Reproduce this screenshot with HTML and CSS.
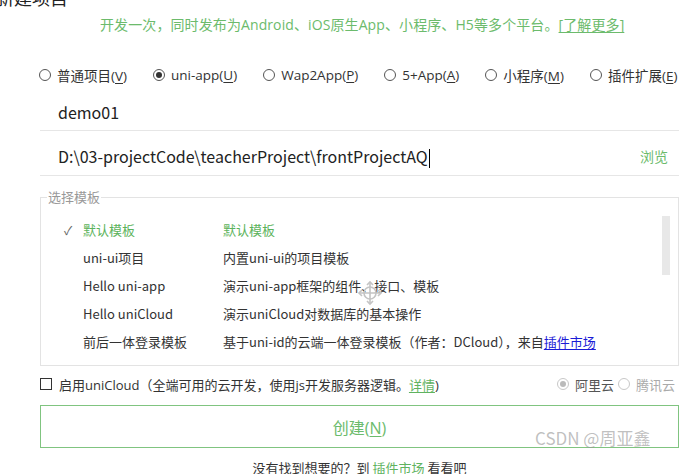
FILE: index.html
```html
<!DOCTYPE html>
<html lang="zh-CN">
<head>
<meta charset="utf-8">
<title>新建项目</title>
<link rel="stylesheet" href="styles.css">
</head>
<body>
<div class="page">
  <div class="title">新建项目</div>
  <div class="subtitle">开发一次，同时发布为Android、iOS原生App、小程序、H5等多个平台。<span class="u">[了解更多]</span></div>
  <div class="radios">
    <label class="radio"><span class="dot"></span><span>普通项目(<span class="u">V</span>)</span></label>
    <label class="radio"><span class="dot on"></span><span>uni-app(<span class="u">U</span>)</span></label>
    <label class="radio"><span class="dot"></span><span>Wap2App(<span class="u">P</span>)</span></label>
    <label class="radio"><span class="dot"></span><span>5+App(<span class="u">A</span>)</span></label>
    <label class="radio"><span class="dot"></span><span>小程序(<span class="u">M</span>)</span></label>
    <label class="radio"><span class="dot"></span><span>插件扩展(<span class="u">E</span>)</span></label>
  </div>
  <div class="field name-field"><span class="val">demo01</span></div>
  <div class="field path-field"><span class="val">D:\03-projectCode\teacherProject\frontProjectAQ<span class="caret"></span></span><span class="browse">浏览</span></div>
  <fieldset class="tpl">
    <legend>选择模板</legend>
    <div class="rows">
      <div class="row sel"><span class="chk">✓</span><span class="name">默认模板</span><span class="desc">默认模板</span></div>
      <div class="row"><span class="chk"></span><span class="name">uni-ui项目</span><span class="desc">内置uni-ui的项目模板</span></div>
      <div class="row"><span class="chk"></span><span class="name">Hello uni-app</span><span class="desc">演示uni-app框架的组件、接口、模板</span></div>
      <div class="row"><span class="chk"></span><span class="name">Hello uniCloud</span><span class="desc">演示uniCloud对数据库的基本操作</span></div>
      <div class="row"><span class="chk"></span><span class="name">前后一体登录模板</span><span class="desc">基于uni-id的云端一体登录模板（作者：DCloud），来自<span class="link">插件市场</span></span></div>
    </div>
    <div class="scroll"></div>
    <svg class="cursor" width="26" height="26" viewBox="0 0 26 26">
      <g fill="none" stroke="#c4c4c4" stroke-width="1.6">
        <circle cx="13" cy="13" r="6"/>
        <path d="M13 2v22M2 13h22"/>
        <path d="M10 5l3-3 3 3M10 21l3 3 3-3M5 10l-3 3 3 3M21 10l3 3-3 3"/>
      </g>
    </svg>
  </fieldset>
  <div class="cloud">
    <label class="check"><span class="box"></span><span>启用uniCloud（全端可用的云开发，使用js开发服务器逻辑。<span class="g u">详情</span>)</span></label>
    <div class="providers">
      <label class="radio dis"><span class="dot on"></span><span class="dark">阿里云</span></label>
      <label class="radio dis"><span class="dot"></span><span>腾讯云</span></label>
    </div>
  </div>
  <div class="create"><span>创建(<span class="u">N</span>)</span></div>
  <div class="foot">没有找到想要的？到 <span class="g">插件市场</span> 看看吧</div>
  <div class="mark">CSDN @周亚鑫</div>
</div>
</body>
</html>
```
FILE: styles.css
```css
* { box-sizing: border-box; }
html, body { margin: 0; padding: 0; background: #fff; }
body {
  font-family: "Noto Sans CJK SC", "Noto Sans", sans-serif;
  color: #333;
  font-size: 13px;
  width: 682px;
  height: 474px;
  overflow: hidden;
}
.page { padding: 0 3px 0 40px; position: relative; height: 474px; }
.title {
  font-size: 18px;
  line-height: 24px;
  height: 24px;
  margin: -15px 0 0 -44px;
  color: #222;
}
.subtitle {
  font-family: "Open Sans", "Noto Sans CJK SC", sans-serif;
  color: #6cbb6c;
  font-size: 14px;
  line-height: 20px;
  height: 20px;
  margin-top: 6px;
  padding-left: 60px;
  white-space: nowrap;
  letter-spacing: 0.1px;
}
.u { text-decoration: underline; text-underline-offset: 2px; }
.g { color: #5fb35f; }
.radios {
  display: flex;
  margin-top: 26px;
  height: 28px;
  align-items: center;
  margin-left: -1px;
  white-space: nowrap;
}
.radios .radio { margin-right: 26px; font-size: 13.5px; }
.radios .radio:last-child { margin-right: 0; }
.radio {
  font-family: "Open Sans", "Noto Sans CJK SC", sans-serif;
  display: inline-flex; align-items: center; gap: 6px; font-size: 14px; color: #333;
}
.dot {
  width: 12px; height: 12px; border-radius: 50%;
  border: 1px solid #555; display: inline-flex; align-items: center; justify-content: center;
  flex: none;
}
.dot.on::after { content: ""; width: 6px; height: 6px; border-radius: 50%; background: #333; }
.field {
  border-bottom: 1px solid #e6e6e6;
  display: flex;
  align-items: center;
  justify-content: space-between;
  padding: 4px 11px 0 18px;
  font-size: 16px;
  color: #222;
}
.name-field { height: 42px; }
.path-field { height: 45px; padding-top: 6px; }
.caret { display: inline-block; width: 1px; height: 19px; background: #000; vertical-align: middle; margin-left: 1px; }
.browse { color: #6cbb6c; font-size: 14px; }
.tpl {
  margin: 13px 0 0 0;
  padding: 0;
  border: 1px solid #e3e3e3;
  height: 177px;
  position: relative;
  min-width: 0;
}
.tpl legend {
  color: #999;
  font-size: 13px;
  padding: 0 1px;
  margin-left: 6px;
  line-height: 16px;
}
.rows { padding: 10px 0 0 23px; }
.row { display: flex; height: 28px; align-items: center; font-size: 13px; color: #333; white-space: nowrap; }
.row.sel { color: #5cb35c; }
.chk { width: 19px; flex: none; color: #666; font-size: 12px; }
.name { width: 140px; flex: none; }
.link { color: #1a1ad6; text-decoration: underline; text-underline-offset: 2px; }
.scroll {
  position: absolute;
  right: 8px;
  top: 11px;
  width: 8px;
  height: 59px;
  background: #e8e8e8;
}
.cursor { position: absolute; left: 316px; top: 75px; }
.cloud {
  display: flex;
  justify-content: space-between;
  align-items: center;
  height: 36px;
  padding-right: 4px;
  white-space: nowrap;
}
.check {
  font-family: "Open Sans", "Noto Sans CJK SC", sans-serif;
  display: inline-flex; align-items: center; gap: 7px; font-size: 13px; color: #333;
}
.box { width: 12px; height: 12px; border: 1px solid #333; display: inline-block; flex: none; }
.providers { display: flex; gap: 4px; }
.radio.dis { color: #aaa; gap: 6px; font-size: 13px; }
.radio.dis .dot { border-color: #c8c8c8; }
.radio.dis .dot.on::after { background: #bbb; }
.dark { color: #555; }
.create {
  font-family: "Open Sans", "Noto Sans CJK SC", sans-serif;
  height: 43px;
  border: 1px solid #80c480;
  display: flex;
  align-items: center;
  justify-content: center;
  color: #6cbb6c;
  font-size: 16px;
  margin-top: 3px;
}
.foot { text-align: center; margin-top: 10px; line-height: 20px; font-size: 13px; color: #333; }
.mark {
  position: absolute;
  left: 535px;
  top: 441px;
  color: rgba(150,150,150,0.6);
  font-size: 17px;
  line-height: 24px;
  white-space: nowrap;
}
```
